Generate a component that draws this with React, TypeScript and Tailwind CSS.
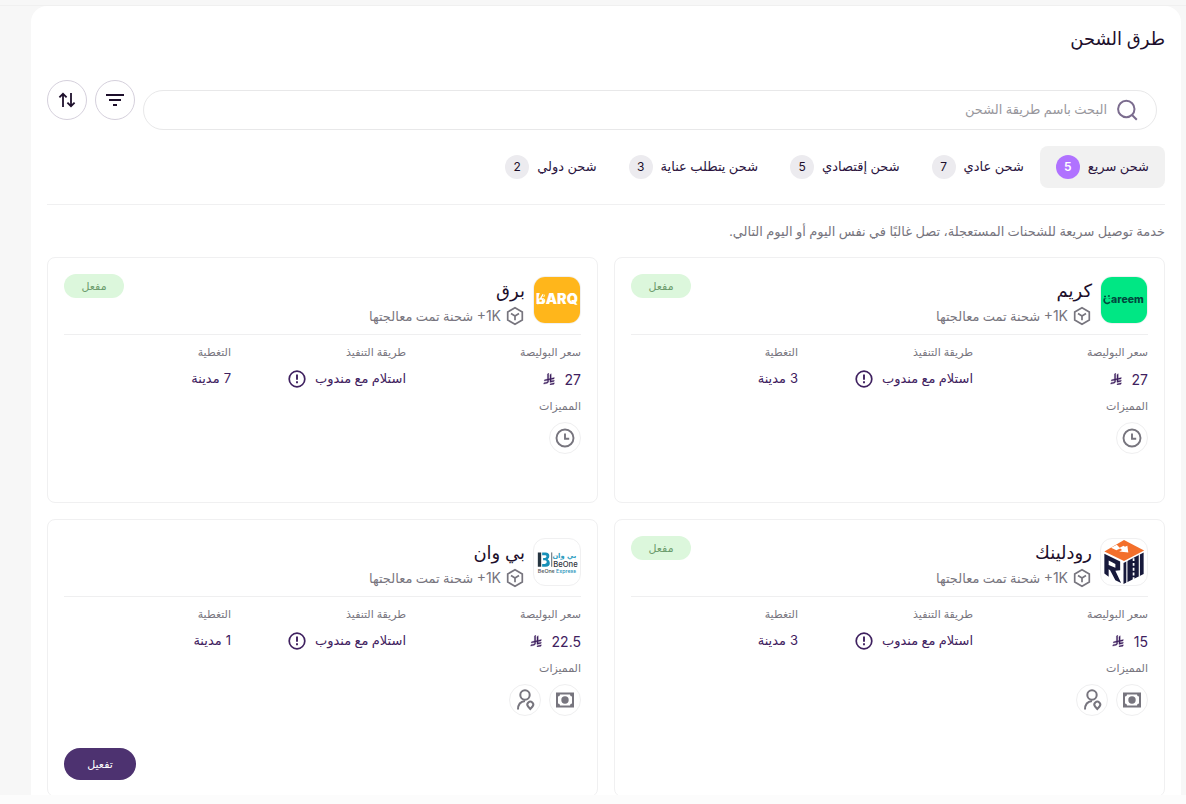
import React, { useState } from "react";
import clsx from "clsx";

type Feature = "clock" | "cash" | "pickup";

interface Carrier {
  id: string;
  name: string;
  price: string;
  cities: number;
  active: boolean;
  features: Feature[];
  logo: React.ReactNode;
}

const TABS = [
  { id: "fast", label: "شحن سريع", count: 5 },
  { id: "normal", label: "شحن عادي", count: 7 },
  { id: "economy", label: "شحن إقتصادي", count: 5 },
  { id: "care", label: "شحن يتطلب عناية", count: 3 },
  { id: "global", label: "شحن دولي", count: 2 },
];

/* ICONS */
function SearchIcon() {
  return (
    <svg className="h-6 w-6 shrink-0" viewBox="0 0 24 24" fill="none" stroke="#7b6c8e" strokeWidth="2">
      <circle cx="11.3" cy="11" r="8.2" />
      <path d="M16.8 16.8l5 5" />
    </svg>
  );
}

function FilterIcon() {
  return (
    <svg className="h-6 w-6" viewBox="0 0 24 24" fill="#1d0f2b">
      <path d="M3 6h18v2H3zM6 11h12v2H6zM10 16h4v2h-4z" />
    </svg>
  );
}

function SortIcon() {
  return (
    <svg className="h-6 w-6" viewBox="0 0 24 24" fill="none" stroke="#1d0f2b" strokeWidth="1.8">
      <path d="M8 19V6M4.400 9.400L8 5.800l3.600 3.600M16 5v13M12.400 14.600l3.600 3.600 3.600-3.600" />
    </svg>
  );
}

function BoxIcon() {
  return (
    <svg className="h-5 w-5 shrink-0" viewBox="0 0 20 20" fill="none" stroke="#77757e" strokeWidth="1.7">
      <path d="M10 1.800l7.300 4.100v8.200L10 18.200l-7.300-4.100V5.900z" />
      <path d="M6 7.600l4 2.400 4-2.400M10 10v4.300" />
    </svg>
  );
}

function InfoIcon() {
  return (
    <svg className="h-5 w-5 shrink-0" viewBox="0 0 20 20" fill="none" stroke="#3f2160" strokeWidth="1.7">
      <circle cx="10" cy="10" r="7.8" />
      <path d="M10 5.600v5.200M10 12.300v2" strokeWidth="1.9" />
    </svg>
  );
}

function RiyalIcon() {
  return (
    <svg className="h-3 w-3 shrink-0" viewBox="0 0 1124 1256" fill="#3f2160" stroke="#3f2160" strokeWidth="30">
      <path d="M699.620 1113.020c-20.060 44.480-33.320 92.750-38.400 143.370l424.510-90.240c20.060-44.470 33.310-92.750 38.400-143.370z" />
      <path d="M1085.730 895.800c20.060-44.470 33.320-92.750 38.400-143.370l-330.680 70.330v-135.200l292.270-62.110c20.060-44.470 33.320-92.750 38.400-143.370l-330.680 70.270V66.130c-50.670 28.450-95.670 66.320-132.250 110.990v403.350l-132.250 28.110V0c-50.670 28.440-95.670 66.320-132.250 110.990v525.690l-295.910 62.880c-20.060 44.470-33.330 92.750-38.420 143.370l334.330-71.050v170.260l-358.300 76.140c-20.060 44.470-33.320 92.750-38.400 143.370l375.040-79.700c30.530-6.350 56.770-24.400 73.830-49.240l68.780-101.970v-.02c7.140-10.550 11.300-23.270 11.300-36.970v-149.980l132.250-28.110v270.400z" />
    </svg>
  );
}

function FeatureIcon({ type }: { type: Feature }) {
  if (type === "clock") {
    return (
      <svg className="h-5 w-5" viewBox="0 0 20 20" fill="none" stroke="#77757e" strokeWidth="1.9">
        <circle cx="10" cy="10" r="8.5" />
        <path d="M10 5.500v5.200h4.200" />
      </svg>
    );
  }
  if (type === "cash") {
    return (
      <svg className="h-5 w-5" viewBox="0 0 20 20">
        <rect x="1" y="2.500" width="18" height="15" fill="#77757e" />
        <path d="M5 4.500h10a2 2 0 0 0 2 2v7a2 2 0 0 0-2 2H5a2 2 0 0 0-2-2v-7a2 2 0 0 0 2-2z" fill="white" />
        <circle cx="10" cy="10" r="3.7" fill="#77757e" />
      </svg>
    );
  }
  return (
    <svg className="h-6 w-6" viewBox="0 0 24 24" fill="none" stroke="#77757e" strokeWidth="2">
      <circle cx="12" cy="7" r="4.7" />
      <path d="M5 21.500c0-5 3-8 7-8.500" />
      <path d="M17.300 21l-2.200-2.500a2.900 2.900 0 1 1 4.400 0z" />
    </svg>
  );
}

/* LOGOS */
function CareemLogo() {
  return (
    <svg className="h-full w-full" viewBox="0 0 48 48" role="img" aria-label="Careem">
      <rect width="48" height="48" fill="#00e784" />
      <path d="M9.200 22.600a3.200 3.200 0 1 0 0 3.400" fill="none" stroke="#00493e" strokeWidth="1.8" />
      <rect x="2.500" y="19" width="8" height="3.200" fill="#00e784" />
      <path d="M3.200 20.300h2M7.200 19.900h2" stroke="#00493e" strokeWidth="1.6" />
      <text x="10.500" y="27.500" direction="ltr" fontFamily="Inter" fontSize="11" fontWeight="800" fill="#00493e">
        areem
      </text>
    </svg>
  );
}

function BarqLogo() {
  return (
    <svg className="h-full w-full" viewBox="0 0 48 48" role="img" aria-label="Barq">
      <rect width="48" height="48" fill="#ffb61b" />
      <text x="24" y="28.500" textAnchor="middle" fontFamily="Inter" fontSize="15" fontWeight="900" fill="white">
        BARQ
      </text>
      <path d="M6.500 15.500l6 0-3 5h3l-5.500 7 1.500-5H4z" fill="#ffb61b" />
      <path d="M4 17.500v11M9.500 18l-3 5h3l-1.500 4" fill="none" stroke="white" strokeWidth="1.4" />
    </svg>
  );
}

function RoadlinkLogo() {
  return (
    <svg className="h-full w-full" viewBox="0 0 48 48" role="img" aria-label="Roadlink">
      <path d="M24 1L45 12 24 23 3.500 13z" fill="#f36f2b" />
      <path d="M10.500 9l6-3 3 3 4-2 1.500 1.200 2.500-1.200 1 7-9.500-1 3-1.500-2-1.500-4 1.800z" fill="white" />
      <path d="M3.500 15.500L20 23.500v9l-5 .5 6 13-6-3-5.500-10.500-1.500-1v8l-4.500-3.500z" fill="#17193b" />
      <path d="M8 22.500v4.500l7 3v-4z" fill="white" />
      <path d="M23.500 25L44.500 14v22.500l-21 10.500z" fill="#17193b" />
      <path d="M27 22v24M40 16v23" stroke="white" strokeWidth="1.2" />
      <path d="M34 20v23" stroke="white" strokeWidth="1.8" strokeDasharray="3 2" />
    </svg>
  );
}

function BeOneLogo() {
  return (
    <svg className="h-full w-full" viewBox="0 0 48 48" role="img" aria-label="BeOne Express">
      <path d="M4 14h3.500v15H4z" fill="#263541" />
      <path d="M8.500 14H12q4 0 4 3.700 0 2.500-1.800 3.500 2.300 1 2.300 3.900 0 3.900-4.300 3.900H8.500v-3h2.800q2 0 2-1.900t-2-1.800H9.500v-2.500h1.800q1.700 0 1.700-1.500T11.300 17H8.500z" fill="#1790b8" />
      <path d="M18.500 14v15" stroke="#263541" strokeWidth=".8" />
      <text x="44" y="20" direction="rtl" textAnchor="start" fontFamily="DejaVu Sans" fontSize="7" fontWeight="700" fill="#2b9cc0">
        بي وان
      </text>
      <text x="20" y="29" direction="ltr" fontFamily="Inter" fontSize="8" fontWeight="500" fill="#30363d">
        BeOne
      </text>
      <text x="4" y="35.500" direction="ltr" fontFamily="Inter" fontSize="5.5" fontWeight="500" fill="#4b5157">
        BeOne <tspan fill="#1790b8">Express</tspan>
      </text>
    </svg>
  );
}

const CARRIERS: Carrier[] = [
  { id: "careem", name: "كريم", price: "27", cities: 3, active: true, features: ["clock"], logo: <CareemLogo /> },
  { id: "barq", name: "برق", price: "27", cities: 7, active: true, features: ["clock"], logo: <BarqLogo /> },
  { id: "roadlink", name: "رودلينك", price: "15", cities: 3, active: true, features: ["cash", "pickup"], logo: <RoadlinkLogo /> },
  { id: "beone", name: "بي وان", price: "22.5", cities: 1, active: false, features: ["cash", "pickup"], logo: <BeOneLogo /> },
];

function CarrierCard({ carrier }: { carrier: Carrier }) {
  return (
    <article className="rounded-lg border border-[#f0f0f1] p-4">
      <header className="flex items-center gap-2 border-b border-[#efeff0] pb-2">
        <div className="h-12 w-12 shrink-0 overflow-hidden rounded-xl border border-[#f0f0f1]">{carrier.logo}</div>
        <div className="min-w-0 flex-1">
          <h2 className="text-[18px] leading-8 text-[#1d0f2b]">{carrier.name}</h2>
          <p className="flex items-center gap-1 text-[13px] leading-5 text-[#77757e]">
            <BoxIcon />
            <span>
              <bdi dir="ltr" className="font-['Inter'] text-[14px]">+1K</bdi> شحنة تمت معالجتها
            </span>
          </p>
        </div>
        {carrier.active && (
          <span className="flex h-6 w-[60px] items-center justify-center self-start rounded-full bg-[#dcf7dc] text-[11px] text-[#6c9c6c]">
            مفعل
          </span>
        )}
      </header>

      <dl className="grid grid-cols-3 gap-2 pt-2">
        <div>
          <dt className="text-[11px] leading-[18px] text-[#77757e]">سعر البوليصة</dt>
          <dd className="mt-2 flex h-5 items-center gap-[10px] font-['Inter'] text-[14px] text-[#3f2160]">
            {carrier.price}
            <RiyalIcon />
          </dd>
        </div>
        <div>
          <dt className="text-[11px] leading-[18px] text-[#77757e]">طريقة التنفيذ</dt>
          <dd className="mt-2 flex h-5 items-center gap-2 text-[13px] text-[#3f2160]">
            استلام مع مندوب
            <InfoIcon />
          </dd>
        </div>
        <div>
          <dt className="text-[11px] leading-[18px] text-[#77757e]">التغطية</dt>
          <dd className="mt-2 flex h-5 items-center gap-1 text-[13px] text-[#3f2160]">
            <span className="font-['Inter']">{carrier.cities}</span> مدينة
          </dd>
        </div>
      </dl>

      <h3 className="mt-2 text-[11px] leading-[18px] text-[#77757e]">المميزات</h3>
      <ul className="mt-[7px] flex gap-2">
        {carrier.features.map((feature) => (
          <li key={feature} className="flex h-8 w-8 items-center justify-center rounded-full border border-[#efeff0]">
            <FeatureIcon type={feature} />
          </li>
        ))}
      </ul>

      <div className="mt-8 flex justify-end">
        {!carrier.active && (
          <button type="button" className="h-8 w-[72px] rounded-full bg-[#4d3270] text-[11px] text-white">
            تفعيل
          </button>
        )}
      </div>
    </article>
  );
}

export default function App() {
  const [tab, setTab] = useState("fast");
  const [query, setQuery] = useState("");

  return (
    <div dir="rtl" className="flex h-screen flex-col bg-[#f7f7f7] font-['Noto_Sans','DejaVu_Sans',sans-serif]">
      <main className="mt-[5px] min-h-0 flex-1 overflow-hidden border-t border-[#f0f0f0] pr-[5px] pl-[31px]">
        <section className="min-h-full rounded-t-2xl bg-white p-4">
          <h1 className="text-[18px] leading-8 text-[#1d0f2b]">طرق الشحن</h1>

          {/* SEARCH + ACTIONS */}
          <div className="mt-[26px] flex items-start gap-2">
            <label className="mt-[10px] mr-2 flex h-10 min-w-0 flex-1 items-center gap-2 rounded-full border border-[#e8e8e9] px-[17px]">
              <SearchIcon />
              <input
                type="text"
                aria-label="البحث"
                value={query}
                onChange={(e) => setQuery(e.target.value)}
                placeholder="البحث باسم طريقة الشحن"
                className="min-w-0 flex-1 bg-transparent text-[13px] outline-none placeholder:text-[#98979d]"
              />
            </label>
            <button type="button" aria-label="تصفية" className="flex h-10 w-10 items-center justify-center rounded-full border border-[#d5d0dc]">
              <FilterIcon />
            </button>
            <button type="button" aria-label="ترتيب" className="flex h-10 w-10 items-center justify-center rounded-full border border-[#d5d0dc]">
              <SortIcon />
            </button>
          </div>

          {/* TABS */}
          <nav className="mt-4 flex border-b border-[#f0f0f1] pb-4">
            {TABS.map((t) => (
              <button
                key={t.id}
                type="button"
                onClick={() => setTab(t.id)}
                className={clsx(
                  "flex h-[42px] items-center gap-2 rounded-lg px-4 text-[13px] whitespace-nowrap text-[#2b1440]",
                  tab === t.id && "bg-[#f1f1f1]"
                )}
              >
                {t.label}
                <span
                  className={clsx(
                    "flex h-6 w-6 items-center justify-center rounded-full font-['Inter'] text-[12px]",
                    tab === t.id ? "bg-[#b072ff] font-semibold text-white" : "bg-[#ecebef] text-[#1d0f2b]"
                  )}
                >
                  {t.count}
                </span>
              </button>
            ))}
          </nav>

          <p className="mt-4 text-[13px] leading-5 text-[#77757e]">
            خدمة توصيل سريعة للشحنات المستعجلة، تصل غالبًا في نفس اليوم أو اليوم التالي.
          </p>

          {/* CARRIERS */}
          <div className="mt-4 grid grid-cols-2 gap-4">
            {CARRIERS.map((carrier) => (
              <CarrierCard key={carrier.id} carrier={carrier} />
            ))}
          </div>
        </section>
      </main>
      <footer className="h-[9px] shrink-0 bg-[#fcfcfc]" />
    </div>
  );
}
